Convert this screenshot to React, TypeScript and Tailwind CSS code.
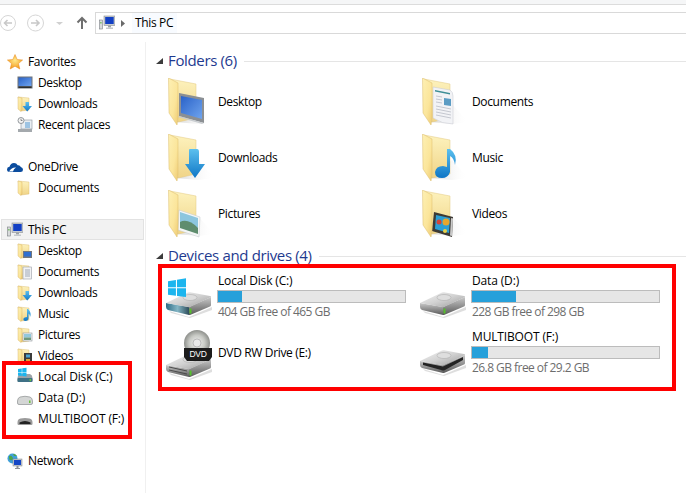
import React from "react";

const Defs = () => (
  <svg className="absolute h-0 w-0" aria-hidden="true">
    <defs>
      <linearGradient id="fBack" x1="0" y1="0" x2="0" y2="1"><stop offset="0" stopColor="#fdf2bd" /><stop offset="1" stopColor="#f0d487" /></linearGradient>
      <linearGradient id="fFlap" x1="0" y1="0" x2="1" y2="1"><stop offset="0" stopColor="#fdf0b4" /><stop offset="0.6" stopColor="#fbe59a" /><stop offset="1" stopColor="#eecb74" /></linearGradient>
      <linearGradient id="screen" x1="0" y1="0" x2="1" y2="1"><stop offset="0" stopColor="#2a62c8" /><stop offset="1" stopColor="#6fa4ee" /></linearGradient>
      <linearGradient id="blueArrow" x1="0" y1="0" x2="0" y2="1"><stop offset="0" stopColor="#5cc0ee" /><stop offset="1" stopColor="#0f76c6" /></linearGradient>
      <linearGradient id="lid" x1="0" y1="0" x2="1" y2="1"><stop offset="0" stopColor="#f4f4f4" /><stop offset="0.5" stopColor="#d2d2d2" /><stop offset="1" stopColor="#9a9a9a" /></linearGradient>
      <linearGradient id="face" x1="0" y1="0" x2="0" y2="1"><stop offset="0" stopColor="#c9c9c9" /><stop offset="1" stopColor="#5a5a5a" /></linearGradient>
      <linearGradient id="faceTeal" x1="0" y1="0" x2="1" y2="0"><stop offset="0" stopColor="#2e6d86" /><stop offset="0.5" stopColor="#84b5c4" /><stop offset="1" stopColor="#2f4e5c" /></linearGradient>
      <linearGradient id="shadow" x1="0" y1="0" x2="1" y2="0"><stop offset="0" stopColor="#a8a8a8" stopOpacity="0.5" /><stop offset="1" stopColor="#ffffff" stopOpacity="0" /></linearGradient>
      <radialGradient id="disc" cx="0.5" cy="0.5" r="0.5"><stop offset="0" stopColor="#f4f4f4" /><stop offset="0.6" stopColor="#c7c9c4" /><stop offset="1" stopColor="#8e908c" /></radialGradient>
      <radialGradient id="star" cx="0.5" cy="0.4" r="0.6"><stop offset="0" stopColor="#ffe98a" /><stop offset="1" stopColor="#f39a1e" /></radialGradient>
    </defs>
  </svg>
);

type Overlay = "desktop" | "downloads" | "pictures" | "documents" | "music" | "videos";

const BigOverlay = ({ kind }: { kind: Overlay }) => {
  switch (kind) {
    case "desktop":
      return (
        <g>
          <path d="M11 15 L36 20 L36 45 L11 38 Z" fill="#8b8f93" />
          <path d="M13 18 L34 22 L34 41 L13 35 Z" fill="url(#screen)" />
          <path d="M11 38 L36 45 L34 46 L10 39 Z" fill="#c8ccd0" />
        </g>
      );
    case "downloads":
      return <path d="M21 16 Q21 15 22 15 L29 15 Q31 15 31 18 L31 30 L37 30 L27 44 L17 30 L21 30 Z" fill="url(#blueArrow)" />;
    case "pictures":
      return (
        <g>
          <path d="M11 20 L32 27 L31 47 L10 40 Z" fill="#f4f6f6" stroke="#c2c8cc" strokeWidth="0.5" />
          <path d="M12 22 L30 28 L30 38 L12 32 Z" fill="#8cc6de" />
          <path d="M12 32 Q20 28 30 38 L30 44 L12 38 Z" fill="#5f8d6e" />
        </g>
      );
    case "documents":
      return (
        <g>
          <path d="M11 9 L28 12 Q31 14 31 18 L31 46 Q20 46 11 40 Z" fill="#f2f3f6" stroke="#c4c7cf" strokeWidth="0.5" />
          <path d="M13 12 L28 15 L28 16.5 L13 13.5 Z" fill="#3d8e96" />
          <path d="M22 20 L29 21 L29 28 L22 27 Z" fill="#5b9cc4" />
          <path d="M14 18 L20 19 M14 21 L20 22 M14 24 L20 25 M14 28 L29 31 M14 31 L29 34 M14 34 L29 37 M14 37 L29 40" stroke="#b9bcc6" strokeWidth="0.8" />
        </g>
      );
    case "music":
      return (
        <g>
          <path d="M25 15 L28 15 Q36 21 33 31 Q32 24 28 22 L28 38 Q26 44 20 44 Q13 44 13 38 Q14 32 21 32 L25 33 Z" fill="url(#blueArrow)" />
        </g>
      );
    default:
      return (
        <g>
          <path d="M12 22 L31 27 L30 47 L10 41 Z" fill="#3d3a35" />
          <path d="M14 25 L28 28 L27 43 L13 39 Z" fill="#2b9fd4" />
          <circle cx="24" cy="32" r="3.5" fill="#e8a62c" />
          <circle cx="17" cy="32" r="2.5" fill="#d2443a" />
          <path d="M29 28 L31 28.5 L30 46 L28 45.5 Z" fill="#c9c9c9" />
          <circle cx="23" cy="41" r="2" fill="#e8d24a" />
        </g>
      );
  }
};

const BigFolder = ({ kind }: { kind: Overlay }) => (
  <svg width="48" height="48" viewBox="0 0 48 48" className="shrink-0">
    <path d="M8 44 L30 46 L46 44 L30 26 Z" fill="url(#shadow)" />
    <path d="M2 1 L28 6 L28 40 L10 44 Z" fill="url(#fBack)" stroke="#e3c880" strokeWidth="0.5" />
    <BigOverlay kind={kind} />
    <path d="M0.5 0 L10 5 L10 40 L9 47 L1 35 Z" fill="url(#fFlap)" stroke="#dcbc6c" strokeWidth="0.5" />
  </svg>
);

const SmallFolder = ({ kind }: { kind: Overlay | "plain" }) => (
  <svg width="16" height="16" viewBox="0 0 16 16" className="shrink-0">
    <path d="M1 1 L12 2 L12 14 L4 15 Z" fill="url(#fBack)" stroke="#d9b766" strokeWidth="0.4" />
    <path d="M1 1 L5 2 L5 14 L4 15.5 L1 13 Z" fill="url(#fFlap)" stroke="#d4ae5c" strokeWidth="0.4" />
    {kind === "desktop" && <g><rect x="6" y="8" width="9" height="7" fill="#72777d" /><rect x="7" y="9" width="7" height="4.5" fill="#2f6fd0" /></g>}
    {kind === "downloads" && <path d="M8.5 6 L12 6 L12 10 L15 10 L10.2 15.5 L5.5 10 L8.5 10 Z" fill="url(#blueArrow)" />}
    {kind === "documents" && <g><rect x="6" y="3" width="8.5" height="12" fill="#f1f2f4" stroke="#9a9da5" strokeWidth="0.6" /><path d="M8 6 H13 M8 8 H13 M8 10 H13 M8 12 H13" stroke="#8e98a8" strokeWidth="0.8" /></g>}
    {kind === "music" && <path d="M10 3 L11 3 Q15 7 13 11 Q13 8 11.5 7.5 L11.5 12.5 Q11 15 8.5 15 Q6 15 6.5 12.5 Q7 11 10 11 Z" fill="url(#blueArrow)" />}
    {kind === "pictures" && <g><rect x="6" y="6" width="9" height="8" fill="#f3f5f5" stroke="#8e9499" strokeWidth="0.6" /><rect x="7" y="7" width="7" height="3.5" fill="#92c8dc" /><rect x="7" y="10.5" width="7" height="2.5" fill="#6f9a7c" /></g>}
    {kind === "videos" && <g><rect x="7" y="5" width="8" height="10" fill="#3b3b3b" /><rect x="9" y="6.5" width="4" height="3" fill="#49a4d4" /><rect x="9" y="11" width="4" height="3" fill="#d9a33a" /></g>}
  </svg>
);

const WinLogo = ({ x, y, s }: { x: number; y: number; s: number }) => (
  <g fill="#1cb5ee">
    <path d={`M${x} ${y + 0.12 * s} L${x + 0.44 * s} ${y + 0.05 * s} L${x + 0.44 * s} ${y + 0.46 * s} L${x} ${y + 0.46 * s} Z`} />
    <path d={`M${x + 0.5 * s} ${y + 0.04 * s} L${x + s} ${y - 0.04 * s} L${x + s} ${y + 0.46 * s} L${x + 0.5 * s} ${y + 0.46 * s} Z`} />
    <path d={`M${x} ${y + 0.52 * s} L${x + 0.44 * s} ${y + 0.52 * s} L${x + 0.44 * s} ${y + 0.93 * s} L${x} ${y + 0.87 * s} Z`} />
    <path d={`M${x + 0.5 * s} ${y + 0.52 * s} L${x + s} ${y + 0.52 * s} L${x + s} ${y + s} L${x + 0.5 * s} ${y + 0.94 * s} Z`} />
  </g>
);

const DriveBody = ({ top, face, led = true }: { top: number; face: string; led?: boolean }) => (
  <g transform={`translate(0 ${top})`}>
    <path d="M4 19 L24 25 L47 15 L47 18 L25 26 L6 21 Z" fill="#b5b5b5" opacity="0.45" />
    <path d="M1 11 L24 15 L24 23 L3 18 Q1 17 1 15 Z" fill={face} />
    <path d="M24 15 L46 5 L46 13 Q46 14 45 14.5 L25 23 L24 23 Z" fill="url(#face)" />
    <path d="M1 11 L23 0.5 Q24 0 25 0.2 L45 4 Q46.5 4.5 46 5 L25 15 Q24 15.5 23 15 Z" fill="url(#lid)" />
    <ellipse cx="25" cy="5.5" rx="7" ry="3" fill="#dedede" stroke="#a6a6a6" strokeWidth="0.5" />
    {led && <rect x="24.5" y="16.5" width="2" height="5" fill="#55c02c" />}
  </g>
);

const LocalDriveIcon = () => (
  <svg width="48" height="56" viewBox="0 0 48 56" className="shrink-0">
    <DriveBody top={22} face="url(#faceTeal)" />
    <WinLogo x={3} y={9} s={18} />
  </svg>
);
const DataDriveIcon = () => (
  <svg width="48" height="56" viewBox="0 0 48 56" className="shrink-0"><DriveBody top={22} face="url(#face)" /></svg>
);
const DvdDriveIcon = () => (
  <svg width="48" height="56" viewBox="0 0 48 56" className="shrink-0">
    <DriveBody top={28} face="url(#face)" />
    <path d="M4 41 L22 45 M4 44 L22 48" stroke="#4b4b4b" strokeWidth="1" />
    <circle cx="32" cy="17" r="13" fill="url(#disc)" />
    <circle cx="32" cy="17" r="4" fill="#e9e9e9" stroke="#9c9c9c" strokeWidth="0.6" />
    <path d="M19 22 H47 V31 L44 35 H22 L19 31 Z" fill="#1c1c1c" />
    <text x="33" y="31" textAnchor="middle" fontSize="8.5" fill="#ffffff" fontFamily="Liberation Sans, sans-serif">DVD</text>
  </svg>
);
const UsbDriveIcon = () => (
  <svg width="48" height="56" viewBox="0 0 48 56" className="shrink-0">
    <DriveBody top={24} face="url(#face)" led={false} />
    <path d="M4 36.5 L24 40.5 L44 31 L44 34 L26 44 Q24 45 22 44 L4 39 Z" fill="#232323" />
  </svg>
);

const PcIcon = () => (
  <svg width="16" height="16" viewBox="0 0 16 16" className="shrink-0">
    <rect x="0.5" y="5" width="3" height="9" fill="#d8dadb" stroke="#7a7f84" strokeWidth="0.6" />
    <rect x="1.3" y="7" width="1.2" height="1.5" fill="#5fb84a" />
    <rect x="5" y="1" width="11" height="9.5" fill="#c9cdd1" stroke="#8a8f94" strokeWidth="0.6" />
    <rect x="6.2" y="2" width="8.5" height="7" fill="#1340c4" />
    <rect x="9" y="10.5" width="3" height="2" fill="#9da2a7" />
    <rect x="7" y="12.5" width="7" height="1.5" fill="#c5c9cc" />
  </svg>
);
const Star = () => (
  <svg width="16" height="16" viewBox="0 0 16 16" className="shrink-0">
    <path d="M8 0.5 L10.2 5.5 L15.6 6 L11.5 9.6 L12.8 15 L8 12.2 L3.2 15 L4.5 9.6 L0.4 6 L5.8 5.5 Z" fill="url(#star)" stroke="#e8891a" strokeWidth="0.5" />
  </svg>
);
const SmallDesktop = () => (
  <svg width="16" height="16" viewBox="0 0 16 16" className="shrink-0">
    <rect x="0.5" y="1.5" width="15" height="12" fill="#6e7277" />
    <rect x="1.5" y="2.5" width="13" height="8.5" fill="url(#screen)" />
    <rect x="1.5" y="11.5" width="13" height="1.5" fill="#2b2f33" />
  </svg>
);
const Recent = () => (
  <svg width="16" height="16" viewBox="0 0 16 16" className="shrink-0">
    <rect x="4" y="3" width="11" height="9" fill="#e9eef2" stroke="#8a9299" strokeWidth="0.6" />
    <path d="M8 6 H13 M8 8 H13 M8 10 H13" stroke="#3f8fd0" strokeWidth="0.9" />
    <circle cx="4" cy="3.5" r="3" fill="#f4f4f4" stroke="#6c7378" strokeWidth="0.7" />
    <path d="M4 1.8 V3.5 H5.5" stroke="#45494d" strokeWidth="0.6" fill="none" />
    <rect x="1" y="12" width="14" height="3" fill="#a4a9ad" />
  </svg>
);
const Cloud = () => (
  <svg width="16" height="16" viewBox="0 0 16 16" className="shrink-0">
    <path d="M3 13 Q0 13 0 10.5 Q0 8 2.5 7.8 Q3.5 4 7 4 Q9.5 4 10.7 6.3 Q13 6 13.8 8 Q16 8.5 16 10.8 Q16 13 13.5 13 Z" fill="#0b4c9e" />
    <path d="M2 12.5 Q5 8 9 8.5 Q6.5 10 6 12.5 Z" fill="#ffffff" />
  </svg>
);
const NetworkIcon = () => (
  <svg width="16" height="16" viewBox="0 0 16 16" className="shrink-0">
    <circle cx="5.5" cy="5.5" r="5" fill="#3f9fd8" />
    <path d="M2 3 Q5 2 5 4 Q7 5 5 7 Q2 8 2 5 Z M6 1 Q9 1 10 3 L7 3 Z" fill="#4fa64a" />
    <rect x="6" y="6" width="9" height="7" fill="#c7cbcf" stroke="#7e8388" strokeWidth="0.5" />
    <rect x="7" y="7" width="7" height="5" fill="#1547c6" />
    <rect x="9.5" y="13" width="2" height="2" fill="#8e9398" />
    <rect x="8" y="15" width="5" height="1" fill="#8e9398" />
  </svg>
);
const SmallLocal = () => (
  <svg width="16" height="20" viewBox="0 0 16 20" className="shrink-0">
    <g transform="translate(0 -4)">
      <path d="M0.5 15 Q0.5 12 3 11 L13 11 Q15.5 12 15.5 15 L15.5 18 Q15.5 19 14 19 L2 19 Q0.5 19 0.5 18 Z" fill="#9ca3a8" />
      <rect x="0.5" y="15" width="15" height="4" rx="1" fill="#3f7186" />
      <rect x="12.5" y="16" width="1.5" height="2" fill="#66c53a" />
    </g>
    <WinLogo x={1} y={1} s={8.5} />
  </svg>
);
const SmallData = () => (
  <svg width="16" height="16" viewBox="0 0 16 16" className="shrink-0">
    <path d="M0.5 11 Q0.5 8 3 7 Q8 5.5 13 7 Q15.5 8 15.5 11 L15.5 13 Q15.5 14.5 14 14.5 L2 14.5 Q0.5 14.5 0.5 13 Z" fill="#d4d6d5" stroke="#7e8183" strokeWidth="0.6" />
    <rect x="12" y="10.5" width="1.5" height="2.5" fill="#66c53a" />
  </svg>
);
const SmallUsb = () => (
  <svg width="16" height="16" viewBox="0 0 16 16" className="shrink-0">
    <path d="M0.5 11.5 Q0.5 8 3.5 7.5 Q8 6.5 12.5 7.5 Q15.5 8 15.5 11.5 L15.5 13 Q15.5 14 14 14 L2 14 Q0.5 14 0.5 13 Z" fill="#9a9a9a" />
    <path d="M2.5 11.5 Q8 8.5 13.5 11.5 L13.5 13 L2.5 13 Z" fill="#222222" />
  </svg>
);

const Row = ({ icon, label, nested, active, wide }: { icon: React.ReactNode; label: string; nested?: boolean; active?: boolean; wide?: boolean }) => (
  <div className={`flex h-[21px] items-center ${nested ? "pl-[17px]" : "pl-[7px]"} gap-[5px] ${active ? "mx-[1px] bg-[#f2f2f2] !pl-[6px] shadow-[inset_0_0_0_1px_#e2e2e2]" : ""}`}>
    <span className="flex h-4 w-4 items-center justify-center">{icon}</span>
    <span className={`whitespace-nowrap text-black ${wide ? "tracking-[-0.15px]" : ""}`}>{label}</span>
  </div>
);

const Frame = ({ className }: { className: string }) => (
  <div className={`pointer-events-none absolute border-4 border-[#ff0000] ${className}`} />
);

const Heading = ({ title }: { title: string }) => (
  <div className="flex h-[21px] items-center">
    <svg width="7" height="6" viewBox="0 0 7 6" className="-mt-[2px] shrink-0"><path d="M0 6 L7 6 L7 0 Z" fill="#3c3c3c" /></svg>
    <span className="-mt-[2px] ml-[5px] whitespace-nowrap text-[15px] text-[#1e3a8f]">{title}</span>
    <div className="ml-[7px] h-px flex-1 bg-[#e5e5e5]" />
  </div>
);

const FolderItem = ({ kind, label }: { kind: Overlay; label: string }) => (
  <div className="flex h-[56px] items-center gap-[2px] pl-[12px]">
    <BigFolder kind={kind} />
    <span className="-mt-[1px] text-black">{label}</span>
  </div>
);

const DriveItem = ({ icon, name, free, pct }: { icon: React.ReactNode; name: string; free?: string; pct?: number }) => (
  <div className="flex h-[56px] items-start gap-[4px] pl-[9px]">
    {icon}
    {free ? (
      <div className="w-[189px]">
        <div className="h-[20px] pl-[1px] pt-[1px] leading-[20px] tracking-[-0.15px] text-black">{name}</div>
        <div className="h-[13px] border border-[#bcbcbc] bg-[#e6e6e6]">
          <div className="h-full bg-[#26a0da]" style={{ width: `${pct}%` }} />
        </div>
        <div className="h-[17px] pl-[1px] leading-[17px] tracking-[-0.55px] text-[#6d6d6d]">{free}</div>
      </div>
    ) : (
      <span className="-mt-[2px] self-center pl-[1px] text-black">{name}</span>
    )}
  </div>
);

export default function App() {
  return (
    <div className="flex h-[493px] w-[686px] flex-col overflow-hidden bg-white font-['Open_Sans','Noto_Sans',sans-serif] text-[12px] tracking-[-0.35px]">
      <Defs />
      <div className="h-[5px] shrink-0 border-b border-[#dcdcdc] bg-[#f5f6f7]" />
      <div className="flex h-[37px] shrink-0 items-start pt-[7px]">
        <div className="flex h-[21px] w-[95px] shrink-0 items-center">
          <svg width="95" height="21" viewBox="0 0 95 21">
            <circle cx="8" cy="11" r="7.5" fill="#ffffff" stroke="#d6d6d6" />
            <path d="M12 11 H4.5 M7.5 8 L4.5 11 L7.5 14" stroke="#c8c8c8" strokeWidth="1.6" fill="none" />
            <circle cx="35.5" cy="11" r="8" fill="#ffffff" stroke="#d6d6d6" />
            <path d="M31 11 H39 M36 8 L39 11 L36 14" stroke="#c8c8c8" strokeWidth="1.6" fill="none" />
            <path d="M56 10 H63 L59.5 13 Z" fill="#d0d0d0" />
            <path d="M82 17 V6 M77.5 10.5 L82 6 L86.5 10.5" stroke="#6f6f6f" strokeWidth="2" fill="none" />
          </svg>
        </div>
        <div className="flex h-[22px] flex-1 items-center border-y border-l border-[#d9d9d9] pl-[3px]">
          <PcIcon />
          <svg width="17" height="16" viewBox="0 0 17 16" className="shrink-0"><path d="M6 5 L10 8.5 L6 12 Z" fill="#6a6a6a" /></svg>
          <span className="flex h-full items-center bg-[#f8fbff] pl-[3px] pr-[4px] text-black">This PC</span>
        </div>
      </div>
      <div className="flex min-h-0 flex-1">
        <nav className="flex w-[146px] shrink-0 flex-col gap-[21px] border-r border-[#f0f0f0] pt-[9px]">
          <section>
            <Row icon={<Star />} label="Favorites" />
            <Row nested icon={<SmallDesktop />} label="Desktop" />
            <Row nested icon={<SmallFolder kind="downloads" />} label="Downloads" />
            <Row nested icon={<Recent />} label="Recent places" />
          </section>
          <section>
            <Row icon={<Cloud />} label="OneDrive" />
            <Row nested icon={<SmallFolder kind="plain" />} label="Documents" />
          </section>
          <section>
            <Row active icon={<PcIcon />} label="This PC" />
            <Row nested icon={<SmallFolder kind="desktop" />} label="Desktop" />
            <Row nested icon={<SmallFolder kind="documents" />} label="Documents" />
            <Row nested icon={<SmallFolder kind="downloads" />} label="Downloads" />
            <Row nested icon={<SmallFolder kind="music" />} label="Music" />
            <Row nested icon={<SmallFolder kind="pictures" />} label="Pictures" />
            <Row nested icon={<SmallFolder kind="videos" />} label="Videos" />
            <div className="relative">
              <Frame className="-bottom-[10px] -top-[5px] left-[2px] w-[130px]" />
              <Row nested wide icon={<SmallLocal />} label="Local Disk (C:)" />
              <Row nested wide icon={<SmallData />} label="Data (D:)" />
              <Row nested wide icon={<SmallUsb />} label="MULTIBOOT (F:)" />
            </div>
          </section>
          <section>
            <Row icon={<NetworkIcon />} label="Network" />
          </section>
        </nav>
        <main className="min-w-0 flex-1 pt-[9px]">
          <div className="pl-[10px]">
            <Heading title="Folders (6)" />
          </div>
          <div className="mt-[2px] grid grid-cols-[254px_254px] pl-[10px]">
            <FolderItem kind="desktop" label="Desktop" />
            <FolderItem kind="documents" label="Documents" />
            <FolderItem kind="downloads" label="Downloads" />
            <FolderItem kind="music" label="Music" />
            <FolderItem kind="pictures" label="Pictures" />
            <FolderItem kind="videos" label="Videos" />
          </div>
          <div className="mt-[4px] pl-[10px]">
            <Heading title="Devices and drives (4)" />
          </div>
          <div className="relative mt-[3px] grid grid-cols-[254px_254px] pl-[10px]">
            <Frame className="-bottom-[9px] -top-[6px] left-[12px] w-[518px]" />
            <DriveItem icon={<LocalDriveIcon />} name="Local Disk (C:)" free="404 GB free of 465 GB" pct={13} />
            <DriveItem icon={<DataDriveIcon />} name="Data (D:)" free="228 GB free of 298 GB" pct={23.5} />
            <DriveItem icon={<DvdDriveIcon />} name="DVD RW Drive (E:)" />
            <DriveItem icon={<UsbDriveIcon />} name="MULTIBOOT (F:)" free="26.8 GB free of 29.2 GB" pct={8.5} />
          </div>
        </main>
      </div>
    </div>
  );
}
